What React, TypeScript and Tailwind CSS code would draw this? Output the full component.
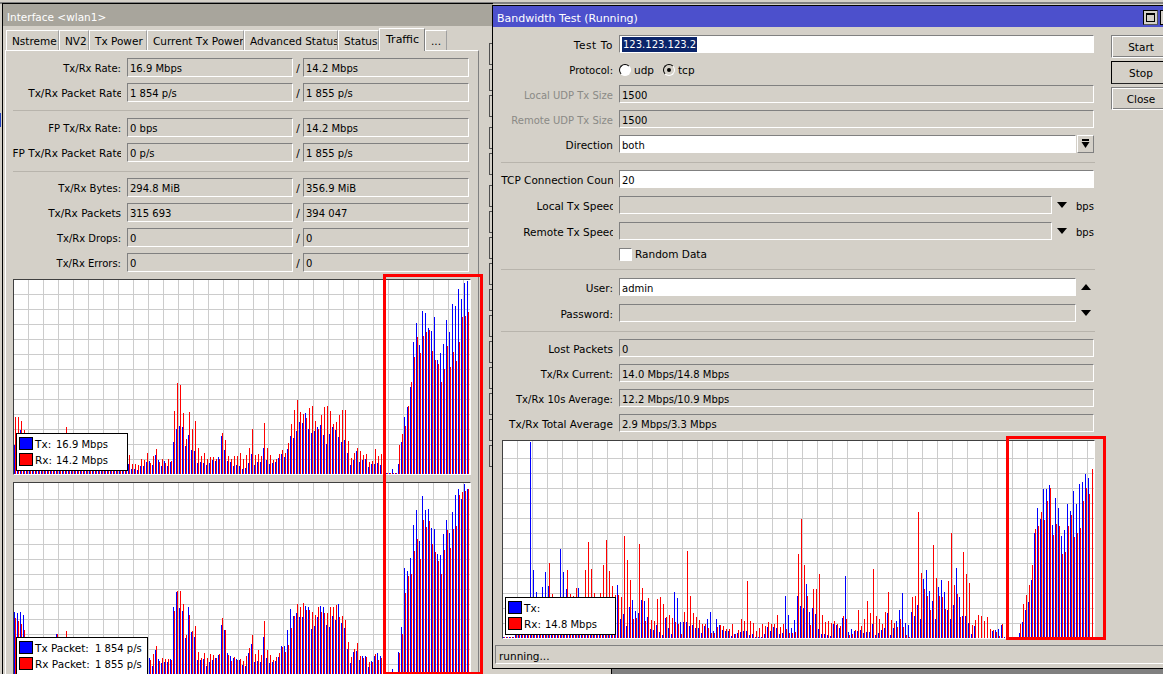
import React from "react";

const pad = (n: number, v: number, over: Record<number, number>) => {
  const a = Array(n).fill(v);
  Object.keys(over).forEach((k) => (a[Number(k)] = over[Number(k)]));
  return a as number[];
};

const T1 = [
  ...pad(38, 20, { 0: 29, 1: 30, 2: 44, 3: 30 }),
  10,5,5,4,8,8,12,13,9,19,14,8,13,8,12,32,45,48,47,28,39,24,23,11,12,11,9,11,14,13,17,38,24,13,12,8,9,8,5,6,11,
  20,9,12,12,26,14,10,11,12,16,20,17,25,38,36,43,52,51,61,45,41,43,47,49,39,30,40,47,44,37,32,34,21,9,14,23,12,14,15,7,10,10,11,9,
  1,1,1,5,1,10,32,57,67,87,132,151,129,163,161,146,143,157,114,121,130,154,142,170,168,185,175,191,193,
];
const R1 = [
  ...pad(38, 20, { 0: 57, 1: 57, 2: 53, 3: 44, 17: 47 }),
  19,10,10,9,15,14,21,11,18,25,12,15,11,15,13,63,91,89,61,35,62,45,53,26,18,21,15,17,17,15,15,41,34,18,15,18,18,21,15,19,26,
  45,19,20,18,51,26,19,14,15,20,24,21,31,50,64,74,62,60,56,66,68,53,45,59,67,68,63,50,52,59,64,64,33,16,21,26,23,19,20,12,13,25,18,20,
  1,1,1,1,1,29,40,48,68,92,117,137,121,138,142,144,123,114,110,92,105,128,107,122,113,132,157,158,162,
];
const T2 = [
  ...pad(45, 20, { 0: 66, 1: 65, 2: 66, 3: 63, 14: 44 }),
  20,12,28,19,15,16,16,19,71,86,70,67,40,71,46,41,18,18,19,12,16,18,20,23,53,48,25,22,20,19,18,13,12,25,
  34,16,17,16,41,20,15,16,17,21,32,32,48,69,62,65,61,61,72,71,49,52,61,72,71,53,51,62,58,74,55,50,29,15,26,27,18,22,22,11,17,22,25,22,
  0,0,0,9,0,26,51,110,107,120,153,168,137,182,168,169,150,149,124,123,144,158,145,166,183,189,179,194,189,
];
const R2 = [
  ...pad(45, 20, { 0: 60, 1: 57, 2: 54, 3: 48, 14: 44, 17: 47 }),
  18,24,32,17,20,19,19,18,67,87,87,74,43,63,47,52,26,20,25,20,24,23,20,24,60,48,23,17,21,18,19,17,22,30,
  43,24,28,23,57,28,23,18,21,25,31,26,33,50,62,74,71,75,68,68,66,63,71,66,65,65,71,71,73,61,62,58,36,21,29,35,22,20,21,16,16,24,18,20,
  0,0,0,0,0,25,44,85,102,104,127,139,119,158,151,157,134,126,117,104,128,148,130,149,152,183,186,187,189,
];
const T3 = [
  ...pad(38, 10, { 0: 1, 1: 1, 2: 1, 3: 1, 9: 196, 10: 68, 11: 46, 12: 30, 13: 51, 14: 66, 15: 52, 19: 89, 20: 66, 21: 49, 25: 50 }),
  53,19,24,12,31,38,27,25,38,37,21,9,8,13,6,3,20,10,4,46,40,16,16,16,12,13,10,10,5,12,19,26,7,19,13,8,7,7,2,4,5,6,7,7,3,4,1,1,1,4,11,7,11,10,4,5,42,23,10,18,42,
  32,30,54,26,30,24,9,4,4,3,2,14,13,10,20,62,6,9,7,7,8,5,6,6,14,3,5,8,10,25,3,10,17,28,45,15,13,26,22,33,19,59,68,47,37,19,51,58,46,28,19,33,70,41,22,22,15,4,12,
  0,0,0,0,0,7,8,9,13,1,0,0,0,0,
  5,16,28,36,58,105,130,119,149,149,153,113,140,130,102,108,134,127,147,134,154,156,164,160,0,
];
const R3 = [
  ...pad(38, 10, { 0: 1, 1: 1, 2: 1, 3: 1, 15: 75, 16: 44, 21: 68, 22: 44, 23: 42, 24: 50, 25: 30, 27: 68, 28: 96, 29: 69, 30: 45, 32: 45, 33: 73, 34: 98, 35: 67, 36: 52, 37: 43 }),
  43,41,102,78,58,19,20,94,50,17,40,18,17,39,41,34,21,23,20,16,14,4,26,87,42,25,21,18,14,14,10,5,5,11,13,12,9,9,14,4,8,19,17,57,17,15,7,10,14,12,16,14,14,23,11,14,9,5,5,6,84,
  119,73,42,13,49,49,64,23,16,17,15,17,14,12,22,19,3,4,8,28,12,19,37,25,69,22,19,14,26,46,18,15,11,19,11,3,1,41,42,126,65,49,42,28,93,60,42,41,29,57,105,53,44,21,86,64,55,13,18,
  23,22,17,21,9,8,6,2,14,0,0,0,0,0,
  14,34,43,53,73,109,112,126,118,137,150,103,114,112,84,86,112,123,101,105,110,137,150,144,169,
];

function Chart({ w, h, hy, tx, rx, className }: { w: number; h: number; hy: number; tx: number[]; rx: number[]; className: string }) {
  const vs: number[] = [];
  for (let x = 14; x < w; x += 15) vs.push(x);
  const hs: number[] = [];
  for (let y = hy; y < h; y += 15) hs.push(y);
  return (
    <div className={"relative border-t border-l border-t-[#404040] border-l-[#404040] border-r border-b border-r-white border-b-white bg-white " + className}>
      <svg width={w} height={h} className="block" shapeRendering="crispEdges">
        {vs.map((x) => (
          <rect key={"v" + x} x={x} y={0} width={1} height={h} fill="#cccccc" />
        ))}
        {hs.map((y) => (
          <rect key={"h" + y} x={0} y={y} width={w} height={1} fill="#cccccc" />
        ))}
        {tx.map((v, i) => (v > 0 ? <rect key={"t" + i} x={i * 3} y={h - v} width={1} height={v} fill="#0000ff" /> : null))}
        {rx.map((v, i) => (v > 0 ? <rect key={"r" + i} x={i * 3 + 1} y={h - v} width={1} height={v} fill="#ff0000" /> : null))}
      </svg>
    </div>
  );
}

function Legend({ className, labelW, a, b, av, bv }: { className: string; labelW: string; a: string; b: string; av: string; bv: string }) {
  const Row = ({ color, label, value }: { color: string; label: string; value: string }) => (
    <div className="flex items-center h-[13px] mb-[3px] last:mb-0">
      <div className={"w-[14px] h-[13px] border border-black shrink-0 " + color} />
      <div className={"ml-[2px] shrink-0 pt-[2px] " + labelW}>{label}</div>
      <div className="whitespace-nowrap pt-[2px] text-[10px]">{value}</div>
    </div>
  );
  return (
    <div className={"absolute bg-white border border-black pl-[2px] pt-[3px] " + className}>
      <Row color="bg-[#0000ff]" label={a} value={av} />
      <Row color="bg-[#ff0000]" label={b} value={bv} />
    </div>
  );
}

const sunken = "border border-t-[#808080] border-l-[#808080] border-r-white border-b-white";

function Lbl({ text, w, clip, gray, pt }: { text: string; w: string; clip?: string; gray?: boolean; pt: string }) {
  return (
    <div className={"overflow-hidden shrink-0 whitespace-nowrap " + pt + " " + w + (gray ? " text-[#8a8a86]" : "")}>
      <div className={"flex justify-end " + (clip || "")}>{text}</div>
    </div>
  );
}

function LeftRow({ label, a, b, clip }: { label: string; a: string; b: string; clip?: string }) {
  return (
    <div className="flex items-center h-[19px] mb-[6px] last:mb-0">
      <Lbl text={label} w="w-[115px]" clip={clip} pt="pt-[2px]" />
      <div className={"ml-[6px] w-[166px] h-full pl-[2px] leading-[19px] text-[10px] " + sunken}>{a}</div>
      <div className="w-[10px] text-center pt-[2px]">/</div>
      <div className={"w-[166px] h-full pl-[2px] leading-[19px] text-[10px] " + sunken}>{b}</div>
    </div>
  );
}

const Sep = ({ className }: { className: string }) => <div className={"h-px bg-[#b8b4ac] " + className} />;

function Tab({ text, w, active }: { text: string; w: string; active?: boolean }) {
  return active ? (
    <div className={"h-[23px] -mt-[2px] -mb-px z-10 bg-[#d4d0c8] border-t border-l border-white border-r-[#808080] border-r pl-[6px] pt-[3px] text-[11px] " + w}>{text}</div>
  ) : (
    <div className={"h-[20px] border-l border-t border-t-white border-l-white border-r border-r-[#a0a0a0] pl-[5px] pt-[3px] whitespace-nowrap overflow-hidden " + w}>{text}</div>
  );
}

function FormRow({ label, mt, clip, gray, pt, children }: { label: string; mt: string; clip?: string; gray?: boolean; pt?: string; children: React.ReactNode }) {
  return (
    <div className={"flex items-center h-[18px] " + mt}>
      <Lbl text={label} w="w-[120px]" clip={clip} gray={gray} pt={pt || "pt-[4px]"} />
      <div className="ml-[6px] flex-1 flex items-center h-full min-w-0">{children}</div>
    </div>
  );
}

const Field = ({ value, white, w }: { value?: string; white?: boolean; w: string }) => (
  <div className={"h-full pl-[2px] leading-[20px] text-[10px] " + sunken + " " + w + (white ? " bg-white" : "")}>{value}</div>
);

const Tri = ({ up, className }: { up?: boolean; className: string }) => (
  <svg width="10" height="6" viewBox="0 0 10 6" className={className}>
    <path d={up ? "M0 6 L5 0 L10 6 Z" : "M0 0 L10 0 L5 6 Z"} fill="#000" />
  </svg>
);

const Radio = ({ on }: { on?: boolean }) => (
  <div className={"w-[12px] h-[12px] rounded-full border border-t-black border-l-black border-r-white border-b-white flex items-center justify-center " + (on ? "bg-[#d4d0c8]" : "bg-white")}>
    {on && <div className="w-[4px] h-[4px] rounded-full bg-black" />}
  </div>
);

const Btn = ({ text, active, mb }: { text: string; active?: boolean; mb?: boolean }) => (
  <div
    className={
      "w-[60px] h-[23px] flex items-center justify-center pt-[2px] " +
      (active ? "border border-black border-r-white border-b-[#222]" : "border border-t-[#808080] border-l-[#808080] border-r-white border-b-white shadow-[inset_1px_1px_0_#ffffff,inset_-1px_-1px_0_#808080]") +
      (mb ? " mb-[3px]" : "")
    }
  >
    {text}
  </div>
);

const backBoxes = [43, 69, 95, 127, 153, 185, 211, 237, 263, 289, 315, 341, 367, 393, 419, 445];

export default function App() {
  return (
    <div className="relative w-[1163px] h-[674px] overflow-hidden bg-[#d4d0c8] text-black text-[10.5px] font-['DejaVu_Sans',sans-serif]">
      <div className="absolute left-0 top-[2px] w-full h-[2px] bg-[#808080]" />
      <div className="absolute left-0 top-[113px] w-px h-[14px] bg-[#2040c0]" />

      {/* left window */}
      <div className="absolute left-[2px] top-[3px] w-[491px] h-[690px] border-l border-t border-black bg-[#d4d0c8]">
        <div className="h-[22px] bg-[#a8a59c] text-white pl-[4px] pt-[6px] leading-[14px]">Interface &lt;wlan1&gt;</div>
        <div className="flex h-[20px] mt-[4px] ml-[3px] relative">
          <Tab text="Nstreme" w="w-[53px]" />
          <Tab text="NV2" w="w-[30px]" />
          <Tab text="Tx Power" w="w-[58px]" />
          <Tab text="Current Tx Power" w="w-[97px]" />
          <Tab text="Advanced Status" w="w-[94px]" />
          <Tab text="Status" w="w-[41px]" />
          <Tab text="Traffic" w="w-[46px]" active />
          <Tab text="..." w="w-[22px]" />
        </div>
        <div className="ml-[2px] w-[474px] h-[640px] border-t border-l border-white border-r border-r-[#808080] pt-[7px] pl-0">
          <LeftRow label="Tx/Rx Rate:" a="16.9 Mbps" b="14.2 Mbps" clip="text-[10px]" />
          <LeftRow label="Tx/Rx Packet Rate" a="1 854 p/s" b="1 855 p/s" clip="-mr-[2px]" />
          <Sep className="ml-[7px] w-[457px] mt-[8px] mb-[7px]" />
          <LeftRow label="FP Tx/Rx Rate:" a="0 bps" b="14.2 Mbps" clip="text-[10px]" />
          <LeftRow label="FP Tx/Rx Packet Rate" a="0 p/s" b="1 855 p/s" clip="-mr-[2px]" />
          <Sep className="ml-[7px] w-[457px] mt-[9px] mb-[6px]" />
          <LeftRow label="Tx/Rx Bytes:" a="294.8 MiB" b="356.9 MiB" clip="text-[10px]" />
          <LeftRow label="Tx/Rx Packets" a="315 693" b="394 047" />
          <LeftRow label="Tx/Rx Drops:" a="0" b="0" clip="text-[10px]" />
          <LeftRow label="Tx/Rx Errors:" a="0" b="0" clip="text-[10px]" />
          <Chart w={456} h={194} hy={14} tx={T1} rx={R1} className="ml-[7px] mt-[7px] w-[458px]" />
          <Chart w={456} h={195} hy={16} tx={T2} rx={R2} className="ml-[7px] mt-[7px] w-[458px]" />
        </div>
      </div>

      <Legend className="left-[16px] top-[433px] w-[112px] h-[38px]" labelW="w-[21px]" a="Tx:" b="Rx:" av="16.9 Mbps" bv="14.2 Mbps" />
      <Legend className="left-[16px] top-[637px] w-[132px] h-[40px]" labelW="w-[60px]" a="Tx Packet:" b="Rx Packet:" av="1 854 p/s" bv="1 855 p/s" />

      {backBoxes.map((y) => (
        <div key={y} className="absolute left-[489px] w-[3px] h-[22px] border-l border-t border-b border-[#505050]" style={{ top: y }} />
      ))}

      {/* desktop behind, lower right */}
      <div className="absolute left-[611px] top-[669px] right-0 bottom-0 bg-[#808080] border-l border-black" />

      {/* right window */}
      <div className="absolute left-[492px] top-[5px] w-[671px] h-[664px] border-l border-t border-b border-black bg-[#d4d0c8]">
        <div className="h-[21px] bg-[#4c50cc] text-white flex items-center pl-[4px] pt-[5px] text-[11px] relative">
          <span>Bandwidth Test (Running)</span>
          <div className="absolute left-[650px] top-[4px] w-[15px] h-[15px] bg-[#d4d0c8] border border-black border-r-[#555] border-b-[#555] flex items-center justify-center">
            <div className="w-[9px] h-[9px] border border-black border-t-2" />
          </div>
          <div className="absolute left-[667px] top-[4px] w-[15px] h-[15px] bg-[#d4d0c8] border border-black" />
        </div>
        <div className="flex">
          <div className="w-[602px] shrink-0 pt-[8px]">
            <FormRow label="Test To" mt="" clip="tracking-[0.6px]">
              <div className={"w-[475px] h-full pl-[2px] bg-white flex items-center text-[10px] " + sunken}>
                <span className="bg-[#0a246a] text-white leading-[15px] px-px">123.123.123.2</span>
              </div>
            </FormRow>
            <FormRow label="Protocol:" mt="mt-[8px]" clip="text-[10px]" pt="pt-0">
              <Radio />
              <span className="ml-[3px] w-[29px] pt-[2px]">udp</span>
              <Radio on />
              <span className="ml-[3px] pt-[2px]">tcp</span>
            </FormRow>
            <FormRow label="Local UDP Tx Size" mt="mt-[6px]" gray clip="text-[10px]" pt="pt-[2px]">
              <Field value="1500" w="w-[475px]" />
            </FormRow>
            <FormRow label="Remote UDP Tx Size" mt="mt-[7px]" gray clip="text-[10px]" pt="pt-[2px]">
              <Field value="1500" w="w-[475px]" />
            </FormRow>
            <FormRow label="Direction" mt="mt-[7px]">
              <Field value="both" white w="w-[457px]" />
              <div className="ml-px w-[17px] h-full bg-[#d4d0c8] border border-t-white border-l-white border-r-[#808080] border-b-[#808080] flex items-center justify-center">
                <svg width="9" height="10" viewBox="0 0 9 10">
                  <rect x="1" y="0" width="7" height="2" fill="#000" />
                  <path d="M0.5 3 H8.5 L4.5 9 Z" fill="#000" />
                </svg>
              </div>
            </FormRow>
            <Sep className="ml-[8px] w-[594px] mt-[9px]" />
            <FormRow label="TCP Connection Count" mt="mt-[7px]" clip="-mr-[5px]">
              <Field value="20" white w="w-[475px]" />
            </FormRow>
            <FormRow label="Local Tx Speed" mt="mt-[8px]" clip="-mr-[3px]">
              <Field w="w-[433px]" />
              <Tri className="ml-[5px] -mt-[1px] shrink-0" />
              <span className="ml-[9px] text-[10px] pt-[2px]">bps</span>
            </FormRow>
            <FormRow label="Remote Tx Speed" mt="mt-[8px]" clip="-mr-[3px]">
              <Field w="w-[433px]" />
              <Tri className="ml-[5px] -mt-[1px] shrink-0" />
              <span className="ml-[9px] text-[10px] pt-[2px]">bps</span>
            </FormRow>
            <div className="flex items-center h-[13px] mt-[8px] pl-[126px]">
              <div className={"w-[13px] h-[13px] bg-white " + sunken} />
              <span className="ml-[3px]">Random Data</span>
            </div>
            <Sep className="ml-[8px] w-[594px] mt-[8px]" />
            <FormRow label="User:" mt="mt-[8px]">
              <Field value="admin" white w="w-[457px]" />
              <Tri up className="ml-[5px] -mt-[1px] shrink-0" />
            </FormRow>
            <FormRow label="Password:" mt="mt-[8px]">
              <Field w="w-[457px]" />
              <Tri className="ml-[5px] -mt-[1px] shrink-0" />
            </FormRow>
            <Sep className="ml-[8px] w-[594px] mt-[9px]" />
            <FormRow label="Lost Packets" mt="mt-[7px]">
              <Field value="0" w="w-[475px]" />
            </FormRow>
            <FormRow label="Tx/Rx Current:" mt="mt-[7px]" clip="text-[10px]" pt="pt-[2px]">
              <Field value="14.0 Mbps/14.8 Mbps" w="w-[475px]" />
            </FormRow>
            <FormRow label="Tx/Rx 10s Average:" mt="mt-[7px]" clip="text-[10px]" pt="pt-[2px]">
              <Field value="12.2 Mbps/10.9 Mbps" w="w-[475px]" />
            </FormRow>
            <FormRow label="Tx/Rx Total Average" mt="mt-[7px]">
              <Field value="2.9 Mbps/3.3 Mbps" w="w-[475px]" />
            </FormRow>
          </div>
          <div className="pt-[8px] ml-[16px]">
            <Btn text="Start" mb />
            <Btn text="Stop" active mb />
            <Btn text="Close" />
          </div>
        </div>
        <Chart w={591} h={197} hy={17} tx={T3} rx={R3} className="ml-[9px] mt-[8px] w-[593px]" />
        <div className="mt-[6px] h-px bg-[#808080] ml-[2px]" />
        <div className="h-[18px] ml-[2px] border-l border-l-[#808080] border-b border-b-white pl-[3px] pt-px leading-[18px]">running...</div>
      </div>

      <Legend className="left-[505px] top-[597px] w-[111px] h-[38px]" labelW="w-[21px]" a="Tx:" b="Rx:" av="" bv="14.8 Mbps" />

      {/* red highlight boxes */}
      <div className="absolute left-[383px] top-[274px] w-[100px] h-[401px] border-[3px] border-[#ff0000]" />
      <div className="absolute left-[1006px] top-[436px] w-[100px] h-[204px] border-[3px] border-[#ff0000]" />
    </div>
  );
}
